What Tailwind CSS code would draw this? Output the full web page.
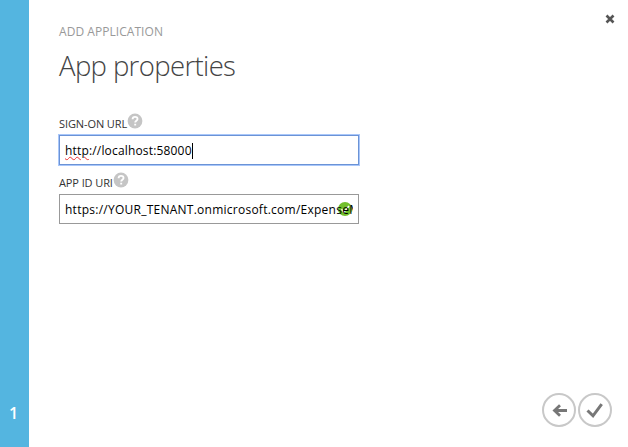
<!DOCTYPE html>
<html lang="en">
<head>
<meta charset="utf-8">
<title>Add application</title>
<script src="https://cdn.jsdelivr.net/npm/@tailwindcss/browser@4"></script>
</head>
<body class="flex h-[447px] w-[628px] overflow-hidden bg-white font-['Open_Sans','Noto_Sans',sans-serif]">
  <aside class="flex w-[29px] shrink-0 flex-col justify-end bg-[#54b5e0] pb-[24px] pl-[9px] text-[16px] leading-5 font-semibold text-white">1</aside>
  <main class="relative flex flex-1 flex-col pl-[30px]">
    <header class="flex flex-col pt-[24px]">
      <p class="h-4 text-[12px] leading-4 font-medium tracking-[0.05px] whitespace-nowrap text-[#999]">ADD APPLICATION</p>
      <h1 class="mt-[6px] h-10 text-[27.5px] leading-10 font-light tracking-[-0.63px] whitespace-nowrap text-[#444]">App properties</h1>
    </header>
    <form class="mt-[27px] flex w-[300px] flex-col">
      <label class="flex h-[22px] items-start text-[11px] leading-[22px] tracking-[-0.1px] whitespace-nowrap text-[#333]">SIGN-ON URL
        <svg class="h-4 w-4" viewBox="0 0 16 16" fill="none"><circle cx="8" cy="8" r="7.4" fill="#c5c5c5"/><path d="M5.6 6.2c0-3.2 4.9-3 4.9-.3 0 1.8-2.3 1.7-2.3 3.6M8.2 10.7v1.8" stroke="#fff" stroke-width="1.9"/></svg>
      </label>
      <div class="flex h-[30px] items-center border border-[#6b93d6] pt-px pl-[5px] text-[12px] leading-5 text-black shadow-[0_0_0_1px_#a9c7fa]">
        <span class="tracking-[0.17px] whitespace-nowrap"><span class="underline decoration-[#e33] decoration-wavy decoration-1 underline-offset-1">http</span>://localhost:58000</span><span class="h-4 w-px bg-black"></span>
      </div>
      <label class="mt-[7px] flex h-[22px] items-start text-[11px] leading-[22px] tracking-[-0.1px] whitespace-nowrap text-[#333]">APP ID URI
        <svg class="h-4 w-4" viewBox="0 0 16 16" fill="none"><circle cx="8" cy="8" r="7.4" fill="#c5c5c5"/><path d="M5.6 6.2c0-3.2 4.9-3 4.9-.3 0 1.8-2.3 1.7-2.3 3.6M8.2 10.7v1.8" stroke="#fff" stroke-width="1.9"/></svg>
      </label>
      <div class="relative flex h-[30px] items-center border border-[#999] px-[5px] pt-px text-[12px] leading-5 text-black">
        <svg class="absolute top-[7px] left-[278px] h-[14px] w-[14px]" viewBox="0 0 14 14" fill="none"><circle cx="7" cy="7" r="7" fill="#72bf2b"/><path d="M3.5 7.2 6 10l5-6" stroke="#fff" stroke-width="1.6"/></svg>
        <span class="relative w-[288px] overflow-hidden tracking-[0.25px] whitespace-nowrap">https://YOUR_TENANT.onmicrosoft.com/ExpenseM</span>
      </div>
    </form>
    <button class="absolute top-[14px] left-[576px] h-[10px] w-[10px]" aria-label="Close"><svg class="block h-[10px] w-[10px]" viewBox="0 0 10 10"><path d="m1.5 1.5 7 7m0-7-7 7" stroke="#555" stroke-width="2.6"/></svg></button>
    <nav class="mt-auto mb-[20px] ml-[483px] flex gap-[2px]">
      <svg class="h-[34px] w-[34px]" viewBox="0 0 34 34" fill="none"><circle cx="17" cy="17" r="16" stroke="#c8c8c8" stroke-width="2"/><path d="M25 17.5H12.5M18 12.3l-5.5 5.2 5.5 5.2" stroke="#777" stroke-width="2.8"/></svg>
      <svg class="h-[34px] w-[34px]" viewBox="0 0 34 34" fill="none"><circle cx="17" cy="17" r="16" stroke="#c8c8c8" stroke-width="2"/><path d="m9.5 17.5 5.5 5.3 8.7-11.6" stroke="#777" stroke-width="3"/></svg>
    </nav>
  </main>
</body>
</html>
